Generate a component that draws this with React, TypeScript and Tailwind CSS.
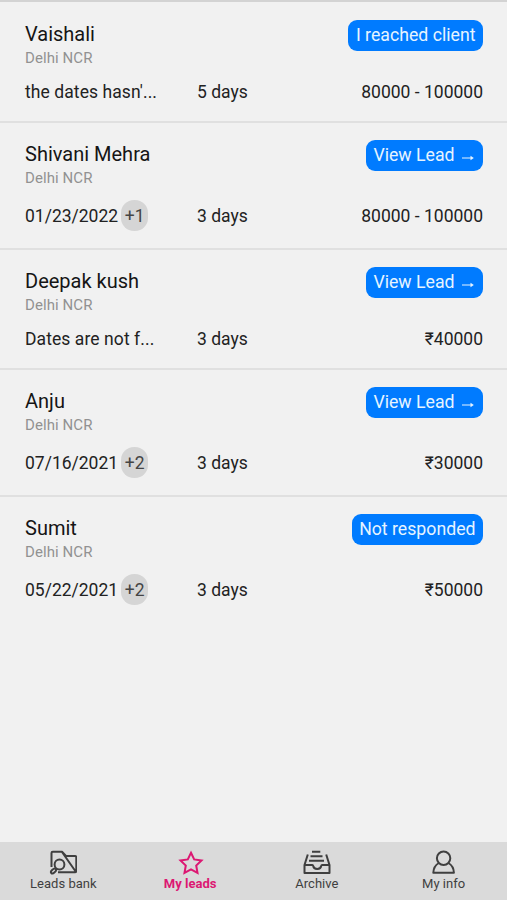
import type { ReactNode } from "react";

type Lead = { name: string; date: string; extra?: string; days: string; price: string; status: string; arrow?: boolean };

const leads: Lead[] = [
  { name: "Vaishali", date: "the dates hasn'...", days: "5 days", price: "80000 - 100000", status: "I reached client" },
  { name: "Shivani Mehra", date: "01/23/2022", extra: "+1", days: "3 days", price: "80000 - 100000", status: "View Lead", arrow: true },
  { name: "Deepak kush", date: "Dates are not f...", days: "3 days", price: "₹40000", status: "View Lead", arrow: true },
  { name: "Anju", date: "07/16/2021", extra: "+2", days: "3 days", price: "₹30000", status: "View Lead", arrow: true },
  { name: "Sumit", date: "05/22/2021", extra: "+2", days: "3 days", price: "₹50000", status: "Not responded" },
];

function LeadRow({ lead, last }: { lead: Lead; last: boolean }) {
  return (
    <div className={`pl-[25px] pr-6 pt-[17px] ${lead.extra ? "h-[127px]" : "h-[120px]"} ${last ? "" : "border-b-2 border-[#e0e0e0]"}`}>
      <div className="flex h-[48px] items-start justify-between">
        <div>
          <div className="h-[27px] text-[20px] leading-[29px] text-[#151515]">{lead.name}</div>
          <div className="text-[15px] leading-[23px] tracking-[0.08px] text-[#929292]">Delhi NCR</div>
        </div>
        <button className="flex h-[31px] items-center whitespace-nowrap rounded-[9px] bg-[#007bff] px-[7.5px] pt-px text-[17.7px] leading-none text-[#e6f4ff]">
          {lead.status}
          {lead.arrow && (
            <svg className="ml-[7px] mr-[2px] mt-[4px]" width="12" height="6" viewBox="0 0 12 6" fill="none" stroke="currentColor" strokeWidth="1">
              <path d="M0 3h10" />
              <path d="M8.500 .8 11.800 3 8.500 5.200z" fill="currentColor" stroke="none" />
            </svg>
          )}
        </button>
      </div>
      <div className={`flex items-center text-[17.5px] text-[#222222] ${lead.extra ? "mt-[12px]" : "mt-[8px]"}`}>
        <div className="flex w-[172px] items-center">
          <span className={`pt-[2px] leading-[29px] ${lead.extra ? "" : "tracking-[0.08px]"}`}>{lead.date}</span>
          {lead.extra && <span className="ml-[3px] h-[31px] w-[27px] rounded-[13px] bg-[#d5d5d5] pt-[2px] text-center leading-[29px] text-[#444444]">{lead.extra}</span>}
        </div>
        <span className="pt-[2px] leading-[29px]">{lead.days}</span>
        <span className="ml-auto pt-[2px] leading-[29px]">{lead.price}</span>
      </div>
    </div>
  );
}

function Tab({ label, active, children }: { label: string; active?: boolean; children: ReactNode }) {
  return (
    <div className={`flex flex-1 flex-col items-center pt-[7px] ${active ? "font-bold text-[#dc1872]" : "text-[#3f3f3f]"}`}>
      <svg width="28" height="26" viewBox="0 0 28 26" fill="none" stroke="currentColor" strokeWidth="2" strokeLinejoin="round">
        {children}
      </svg>
      <span className="text-[13px] leading-[18px] tracking-[0.03px]">{label}</span>
    </div>
  );
}

export default function App() {
  return (
    <div className="flex h-[900px] w-[507px] flex-col overflow-hidden bg-[#f1f1f1] font-[Roboto,sans-serif]">
      <div className="h-[2px] shrink-0 bg-[#d3d3d3]" />
      <main className="flex-1 pt-px">
        {leads.map((lead, i) => (
          <LeadRow key={lead.name} lead={lead} last={i === leads.length - 1} />
        ))}
      </main>
      <nav className="flex h-[58px] shrink-0 bg-[#dadada]">
        <Tab label="Leads bank">
          <path d="M2.500 18V4q0-1.300 1.300-1.300H13l4 4.300h9q1.300 0 1.300 1.300V22q0 1.300-1.300 1.300H9M13 3 27 23" />
          <circle cx="10.500" cy="15.500" r="4.900" />
          <ellipse cx="4.500" cy="22" rx="3" ry="1.700" transform="rotate(-42 4.500 22)" />
        </Tab>
        <Tab label="My leads" active>
          <path strokeLinejoin="miter" d="m15 3.800 3.200 6.600 7.300 1-5.300 5.100 1.300 7.300-6.500-3.500-6.500 3.500 1.300-7.300-5.300-5.100 7.300-1z" />
        </Tab>
        <Tab label="Archive">
          <path d="M9 2.800h8.300M7.500 7.200h12M6 11.800h15M4.800 5.500 1.500 16V24h25V16L23.200 5.500M1.500 16h7.800q.7 0 .9.900c.5 4 7.500 4 8 0q.2-.9.900-.9h7.400" />
        </Tab>
        <Tab label="My info">
          <circle cx="13.600" cy="9.200" r="6.700" />
          <path d="M8.800 14Q3.600 17 3.300 23.800h20.600Q23.700 17 18.400 14" />
        </Tab>
      </nav>
    </div>
  );
}
